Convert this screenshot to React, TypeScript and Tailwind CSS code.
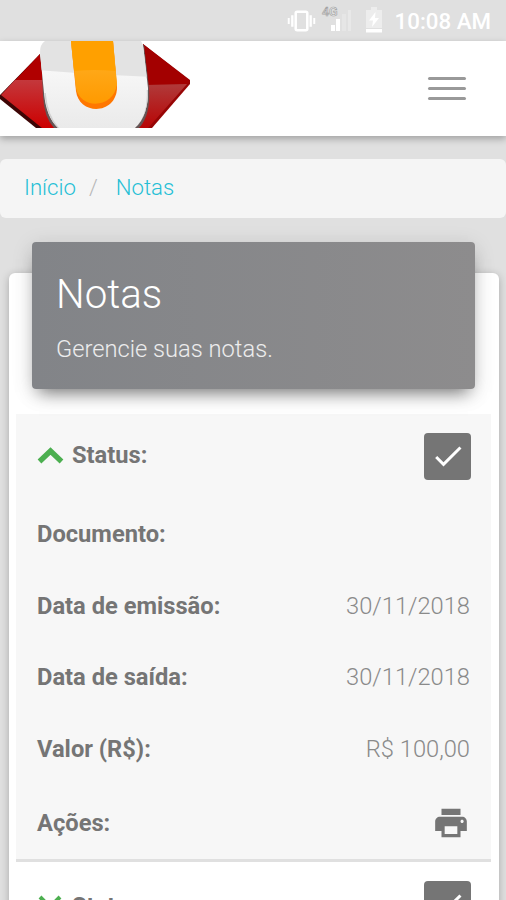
import { MdCheck, MdPrint } from "react-icons/md";

interface NoteRow {
  label: string;
  value: string;
  height: string;
}

const rows: NoteRow[] = [
  { label: "Documento:", value: "", height: "h-[72px]" },
  { label: "Data de emissão:", value: "30/11/2018", height: "h-[71px]" },
  { label: "Data de saída:", value: "30/11/2018", height: "h-[72px]" },
  { label: "Valor (R$):", value: "R$ 100,00", height: "h-[72px]" },
];

function StatusBar() {
  return (
    <div className="flex h-[41px] items-center justify-end bg-[#e0e0e0] pr-[15px] text-white">
      {/* vibrate */}
      <svg className="mr-[5px] h-[24px] w-[29px]" viewBox="0 0 30 24" fill="none" stroke="currentColor">
        <rect x="9" y="2.5" width="12" height="19" rx="1.5" strokeWidth="2.6" />
        <path d="M5.5 6v12M24.5 6v12" strokeWidth="2.4" />
        <path d="M1.800 9v6M28.200 9v6" strokeWidth="2" />
      </svg>
      {/* signal */}
      <svg className="mr-[13px] h-[32px] w-[31px]" viewBox="0 0 31 32">
        <rect x="10" y="20" width="4" height="6" fill="#fff" />
        <rect x="15" y="14" width="4" height="12" fill="#fff" />
        <rect x="21" y="9" width="4" height="17" fill="#e6e6e6" />
        <rect x="27" y="5" width="3" height="21" fill="#e8e8e8" />
        <text x="1" y="11" fontFamily="Roboto, sans-serif" fontSize="12.5" fontWeight="500" fill="#eee" stroke="#a4a4a4" strokeWidth="0.7">
          4G
        </text>
      </svg>
      {/* charging battery */}
      <svg className="mb-[2px] mr-[12px] h-[26px] w-[18px]" viewBox="0 0 18 26">
        <path d="M1 3h5V0h6v3h5v18H1z" fill="#ededed" />
        <path d="M1 22h16v3.5H1z" fill="#fff" />
        <path d="M10.500 5 4 13.500h4L7 20l7-9h-4z" fill="#fff" />
      </svg>
      <span className="pt-px text-[22.300px] font-medium leading-none">10:08 AM</span>
    </div>
  );
}

function Logo() {
  return (
    <svg className="h-[88px] w-[192px]" viewBox="0 0 192 88">
      <defs>
        <linearGradient id="redLeft" x1="0" y1="0" x2="0" y2="1">
          <stop offset="0" stopColor="#c4383c" />
          <stop offset="1" stopColor="#cc0000" />
        </linearGradient>
        <linearGradient id="redRight" x1="0" y1="0" x2="0" y2="1">
          <stop offset="0" stopColor="#b03a3a" />
          <stop offset="1" stopColor="#b80505" />
        </linearGradient>
        <linearGradient id="orange" x1="0" y1="0" x2="0" y2="1">
          <stop offset="0" stopColor="#ffb32b" />
          <stop offset="1" stopColor="#ff9a00" />
        </linearGradient>
        <linearGradient id="white" x1="0" y1="0" x2="0" y2="1">
          <stop offset="0.3" stopColor="#f8f8f8" />
          <stop offset="1" stopColor="#eaeaea" />
        </linearGradient>
        <clipPath id="body">
          <path d="M45 0Q40 3 40 12L44 52Q46 76 58 87H135Q149 74 148 47L143.500 8Q143 3 141 0z" />
        </clipPath>
      </defs>
      {/* left wing */}
      <path d="M0 54V58L36 87H60L40 13z" fill="#3d0505" />
      <path d="M1 54 40 13 43 39H15z" fill="#b00000" />
      <path d="M1 54 15 39H43L57 87H42z" fill="url(#redLeft)" />
      {/* right wing */}
      <path d="M143 3 190 39V43L152 87H134z" fill="#970505" />
      <path d="M143 3 189 39 188 43 145 45z" fill="#a30000" />
      <path d="M145 44 187 43 148 87H134z" fill="url(#redRight)" />
      {/* body */}
      <path d="M41 10 43 55Q44 76 54 87H139Q151 74 149 47L144 4z" fill="#655" />
      <g clipPath="url(#body)">
        <path d="M38 0H152V87H38z" fill="url(#white)" />
        <path d="M38 0H152V36Q95 34 38 29z" fill="#e3e3e3" />
        <path d="M45 52Q47 77 61 90M134 90Q149 76 147.500 49" fill="none" stroke="#d0d0d0" strokeWidth="1.5" />
      </g>
      {/* tongue */}
      <path d="M71 0 76 50C79 75 117 74 117 46L113 0z" fill="#ff7700" />
      <path d="M71 0 76 47C80 69 114 68 117 43L113 0z" fill="url(#orange)" />
      <path d="M71 0H113L115.500 30Q95 28 74 30z" fill="#ffa000" />
    </svg>
  );
}

function Checkbox() {
  return (
    <div className="-mr-px flex size-[47px] items-center justify-center rounded-[4px] bg-[#757575] text-white">
      <MdCheck className="size-[36px]" />
    </div>
  );
}

function StatusRow({ open }: { open: boolean }) {
  return (
    <div className="flex h-[84px] items-center justify-between">
      <div className={`flex items-center font-bold ${open ? "pb-[2px]" : "pt-[4px]"}`}>
        {open ? (
          <svg className="mr-[8px] h-[18px] w-[27px]" viewBox="0 0 27 18" fill="none" stroke="#4caf50" strokeWidth="5.4">
            <path d="M2.500 15.500 13.500 5 24.500 15.500" />
          </svg>
        ) : (
          <svg className="mr-[8px] h-[22px] w-[27px]" viewBox="0 0 27 22" fill="none" stroke="#4caf50" strokeWidth="4">
            <path d="M3 2 22 21M23 2 4 21" />
          </svg>
        )}
        Status:
      </div>
      <Checkbox />
    </div>
  );
}

export default function App() {
  return (
    <div className="h-[900px] overflow-hidden bg-[#e0e0e0] font-[Roboto,sans-serif] text-[#757575]">
      <StatusBar />
      <header className="relative flex h-[95px] items-start justify-between bg-white shadow-[0_3px_7px_rgba(0,0,0,0.28)]">
        <Logo />
        <button className="mr-[40px] mt-[36px] flex w-[38px] flex-col gap-[7px]" aria-label="Menu">
          <span className="h-[3px] rounded-full bg-[#999]" />
          <span className="h-[3px] rounded-full bg-[#999]" />
          <span className="h-[3px] rounded-full bg-[#999]" />
        </button>
      </header>

      <nav className="mt-[23px] flex h-[59px] items-center rounded-[6px] bg-[#f5f5f5] pb-[2px] pl-[24px] text-[22.200px] font-light">
        <a className="text-[#26bfd5]">Início</a>
        <span className="ml-[13px] mr-[18px] text-[#b8b8b8]">/</span>
        <a className="text-[#26bfd5]">Notas</a>
      </nav>

      <main className="ml-[9px] mr-[7px] mt-[55px] h-[700px] rounded-[6px] bg-white pl-[7px] pr-[8px] shadow-[0_2px_8px_rgba(0,0,0,0.25)]">
        <div className="relative -mt-[31px] ml-[16px] mr-[16px] inline-block h-[147px] w-[443px] rounded-[4px] bg-linear-to-r from-[#828488] to-[#8d8c8d] pl-[24px] align-top font-light text-white shadow-[0_10px_16px_-7px_rgba(0,0,0,0.5),0_4px_22px_rgba(0,0,0,0.12)]">
          <h1 className="mt-[28px] text-[40.300px] leading-[50px]">Notas</h1>
          <p className="mt-[13px] text-[23.700px] leading-[32px] text-white/85">Gerencie suas notas.</p>
        </div>

        <div className="mt-[25px] text-[23.700px] leading-[32px]">
          <section className="h-[448px] border-b-[3px] border-[#e0e0e0] bg-[#f7f7f7] pl-[21px] pr-[21px]">
            <StatusRow open />
            {rows.map((row) => (
              <div key={row.label} className={`flex items-center justify-between ${row.height}`}>
                <span className="font-bold">{row.label}</span>
                <span className="font-light text-[#8a8a8a]">{row.value}</span>
              </div>
            ))}
            <div className="flex h-[75px] items-center justify-between">
              <span className="font-bold">Ações:</span>
              <MdPrint className="size-[38px]" />
            </div>
          </section>
          <section className="pl-[21px] pr-[21px]">
            <StatusRow open={false} />
          </section>
        </div>
      </main>
    </div>
  );
}
